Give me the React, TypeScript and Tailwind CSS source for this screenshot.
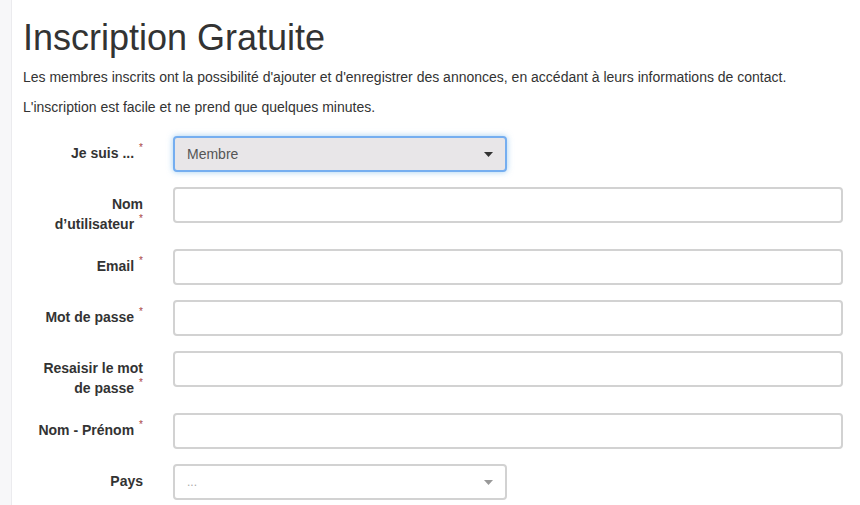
import React from 'react';

const Req = () => (
  <span className="ml-[5px] inline-block align-top text-[10px] leading-[10px] font-normal text-[#a94442]">*</span>
);

function Caret({ color }: { color: string }) {
  return (
    <svg width="9" height="5" viewBox="0 0 9 5" className="shrink-0">
      <path d="M0 0 H9 L4.5 5 Z" fill={color} />
    </svg>
  );
}

function Row({ label, required = true, children }: { label: React.ReactNode; required?: boolean; children: React.ReactNode }) {
  return (
    <div className="mb-[15px] flex">
      <div className="w-[120px] shrink-0 pl-[10px] pt-[7px] text-right text-[14px] leading-[20px] font-bold text-[#333]">
        {label}
        {required && <Req />}
      </div>
      <div className="ml-[30px] flex-1">{children}</div>
    </div>
  );
}

const inputCls =
  'block h-[36px] w-full rounded-[4px] border-2 border-[#d2d2d2] bg-white px-3 text-[14px] text-[#555] outline-none';

export default function App() {
  return (
    <div className="flex h-[505px] w-[860px] overflow-hidden bg-white font-['Liberation_Sans',Arial,sans-serif] text-[#333]">
      {/* left rail */}
      <div className="w-[12px] shrink-0 border-r border-[#ebebee] bg-[#f7f7f9]" />

      <div className="flex-1 pl-[11px] pr-[17px] pt-[18px]">
        <h1 className="mb-[9px] text-[36px] leading-[40px] font-normal text-[#333]">Inscription Gratuite</h1>
        <p className="mb-[10px] text-[14px] leading-[20px]">
          Les membres inscrits ont la possibilité d'ajouter et d'enregistrer des annonces, en accédant à leurs informations de contact.
        </p>
        <p className="mb-[19px] text-[14px] leading-[20px]">L'inscription est facile et ne prend que quelques minutes.</p>

        <form>
          <Row label="Je suis ...">
            <div className="flex h-[36px] w-[334px] items-center justify-between rounded-[4px] border-2 border-[#75aef0] bg-[#e8e6e8] pl-[12px] pr-[12px] text-[14px] text-[#555] shadow-[0_0_6px_rgba(102,175,233,0.6)]">
              <span>Membre</span>
              <Caret color="#333" />
            </div>
          </Row>
          <Row label="Nom d’utilisateur">
            <input className={inputCls} />
          </Row>
          <Row label="Email">
            <input className={inputCls} />
          </Row>
          <Row label="Mot de passe">
            <input type="password" className={inputCls} />
          </Row>
          <Row label="Resaisir le mot de passe">
            <input type="password" className={inputCls} />
          </Row>
          <Row label="Nom - Prénom">
            <input className={inputCls} />
          </Row>
          <Row label="Pays" required={false}>
            <div className="flex h-[36px] w-[334px] items-center justify-between rounded-[4px] border-2 border-[#d2d2d2] bg-white pl-[12px] pr-[12px] text-[12px] text-[#aaa]">
              <span>...</span>
              <Caret color="#999" />
            </div>
          </Row>
        </form>
      </div>
    </div>
  );
}
